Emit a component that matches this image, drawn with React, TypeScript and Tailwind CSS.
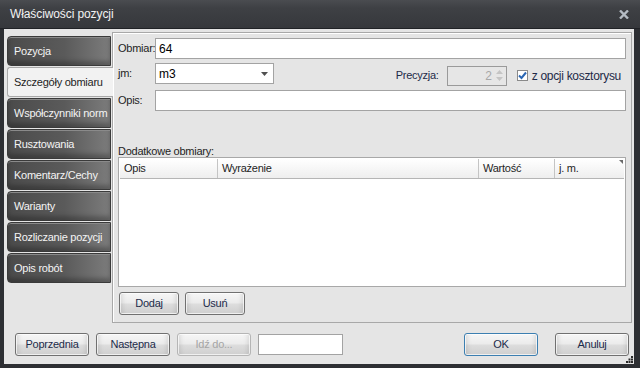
import React from "react";

const font = { fontFamily: '"Liberation Sans", Arial, sans-serif' };

const tabs = [
  "Pozycja",
  "Szczegóły obmiaru",
  "Współczynniki norm",
  "Rusztowania",
  "Komentarz/Cechy",
  "Warianty",
  "Rozliczanie pozycji",
  "Opis robót",
];

function Btn({
  label,
  w,
  disabled,
  primary,
}: {
  label: string;
  w: string;
  disabled?: boolean;
  primary?: boolean;
}) {
  return (
    <div
      className={`${w} h-[23px] flex items-center justify-center rounded-[3px] border text-[11px] ${
        primary ? "border-[#3c7fb1]" : disabled ? "border-[#b5b5b5]" : "border-[#707070]"
      } ${disabled ? "text-[#a5a5a5]" : "text-[#1c2b4a]"} bg-[linear-gradient(to_bottom,#f6f6f6_0%,#ececec_45%,#dcdcdc_55%,#cfcfcf_100%)] shadow-[inset_0_0_0_1px_rgba(255,255,255,0.7),inset_6px_0_5px_-4px_rgba(0,0,0,0.12),inset_-6px_0_5px_-4px_rgba(0,0,0,0.12)]`}
    >
      {label}
    </div>
  );
}

export default function App() {
  return (
    <div
      className="w-[640px] h-[368px] bg-[#2d2f33] flex flex-col overflow-hidden whitespace-nowrap"
      style={font}
    >
      {/* Title bar */}
      <div className="h-[29px] shrink-0 flex items-center justify-between pl-[10px] pr-[10px] bg-[linear-gradient(to_bottom,#4a4c50_0%,#3e4044_30%,#36383c_100%)] border-b border-[#202226]">
        <span className="text-[12px] text-[#f2f2f2] pb-[1px] tracking-[-0.1px]">Właściwości pozycji</span>
        <svg width="10" height="9" viewBox="0 0 10 9" className="mr-[1px]">
          <path d="M1 0.5 L9 8.5 M9 0.5 L1 8.5" stroke="#b5bcc4" strokeWidth="2.4" />
        </svg>
      </div>

      {/* Client area */}
      <div className="flex-1 ml-[4px] mr-[6px] mb-[4px] bg-[#e5e5e5] flex flex-col relative tracking-[-0.25px]">
        <div className="flex mt-[3px] mr-[2px]">
          {/* Tabs */}
          <div className="w-[108px] shrink-0 pl-[3px] pt-[4px] flex flex-col gap-[1px]">
            {tabs.map((t, i) =>
              i === 1 ? (
                <div
                  key={t}
                  className="relative z-10 h-[30px] -mr-[1px] flex items-center pl-[6px] text-[11px] text-[#1e1e1e] bg-[#f2f2f2] border border-r-0 border-[#a9a9a9] rounded-l-[3px]"
                >
                  {t}
                </div>
              ) : (
                <div
                  key={t}
                  className="h-[30px] mr-[1px] flex items-center pl-[6px] text-[11px] text-[#f4f4f4] rounded-l-[4px] border border-[#3a3a3a] overflow-hidden bg-[linear-gradient(to_right,#4b4b4b_0%,#5a5a5a_55%,#7c7c7c_100%)] shadow-[inset_0_1px_0_#8a8a8a,inset_0_-4px_4px_rgba(0,0,0,0.25)]"
                >
                  {t}
                </div>
              )
            )}
          </div>

          {/* Panel */}
          <div className="flex-1 h-[291px] border border-[#a8a8a8] shadow-[inset_1px_1px_0_#ffffff] bg-[#e5e5e5] px-[5px] pt-[5px] flex flex-col text-[11px] text-[#1e1e1e]">
            {/* Row 1 */}
            <div className="flex items-center h-[21px]">
              <span className="w-[37px]">Obmiar:</span>
              <div className="flex-1 h-[21px] bg-white border border-[#a3a3a3] flex items-center pl-[3px] text-[12px] text-black tracking-normal">
                64
              </div>
            </div>
            {/* Row 2 */}
            <div className="flex items-center h-[21px] mt-[4px]">
              <span className="w-[37px]">jm:</span>
              <div className="w-[119px] h-[21px] bg-white border border-[#a3a3a3] flex items-center justify-between pl-[3px] pr-[5px] text-[12px] text-black tracking-normal">
                <span>m3</span>
                <svg width="7" height="4" viewBox="0 0 7 4">
                  <path d="M0 0 H7 L3.5 4 Z" fill="#505050" />
                </svg>
              </div>
              <div className="flex-1" />
              <span className="mt-[4px] mr-[8px] text-[#1e2a48]">Precyzja:</span>
              <div className="mt-[4px] w-[60px] h-[20px] border border-[#9a9a9a] bg-[#e6e6e6] flex items-center justify-end pr-[2px]">
                <span className="text-[12px] text-[#a8a8a8] mr-[4px]">2</span>
                <div className="flex flex-col gap-[3px] mr-[1px]">
                  <svg width="7" height="4" viewBox="0 0 7 4">
                    <path d="M0 4 H7 L3.5 0 Z" fill="#c4c4c4" />
                  </svg>
                  <svg width="7" height="4" viewBox="0 0 7 4">
                    <path d="M0 0 H7 L3.5 4 Z" fill="#c4c4c4" />
                  </svg>
                </div>
              </div>
              <div className="mt-[4px] ml-[10px] w-[11px] h-[11px] border border-[#8a8a8a] bg-white flex items-center justify-center">
                <svg width="9" height="9" viewBox="0 0 9 9">
                  <path d="M1 4.5 L3.5 7 L8 1.5" stroke="#2a66b4" strokeWidth="2" fill="none" />
                </svg>
              </div>
              <span className="mt-[4px] ml-[4px] mr-[5px] text-[12px] text-[#1e2a48] tracking-[-0.3px]">z opcji kosztorysu</span>
            </div>
            {/* Row 3 */}
            <div className="flex items-center h-[21px] mt-[6px]">
              <span className="w-[37px]">Opis:</span>
              <div className="flex-1 h-[21px] bg-white border border-[#a3a3a3]" />
            </div>

            <div className="mt-[33px] h-[14px] leading-[14px]">Dodatkowe obmiary:</div>

            {/* Table */}
            <div className="mt-[-1px] h-[130px] border border-[#a8a8a8] bg-white flex flex-col p-[1px]">
              <div className="relative h-[20px] flex bg-[linear-gradient(to_bottom,#ffffff,#eeeeee)] border-b border-[#b5b5b5] text-[11px]">
                <div className="w-[98px] border-r border-[#c4c4c4] flex items-center pl-[4px]">Opis</div>
                <div className="w-[261px] border-r border-[#c4c4c4] flex items-center pl-[4px]">Wyrażenie</div>
                <div className="w-[76px] border-r border-[#c4c4c4] flex items-center pl-[4px]">Wartość</div>
                <div className="flex-1 flex items-center pl-[4px]">j. m.</div>
                <svg width="4" height="4" viewBox="0 0 4 4" className="absolute right-[1px] top-[1px]">
                  <path d="M0 0 H4 V4 Z" fill="#6a6a6a" />
                </svg>
              </div>
            </div>

            <div className="flex gap-[6px] mt-[5px] ml-[1px]">
              <Btn label="Dodaj" w="w-[60px]" />
              <Btn label="Usuń" w="w-[60px]" />
            </div>
          </div>
        </div>

        {/* Bottom bar */}
        <div className="flex items-center mt-[10px] pl-[11px]">
          <Btn label="Poprzednia" w="w-[74px]" />
          <div className="w-[7px]" />
          <Btn label="Następna" w="w-[74px]" />
          <div className="w-[7px]" />
          <Btn label="Idź do..." w="w-[74px]" disabled />
          <div className="w-[7px]" />
          <div className="w-[85px] h-[21px] bg-white border border-[#a3a3a3]" />
          <div className="flex-1" />
          <Btn label="OK" w="w-[74px]" primary />
          <div className="w-[17px]" />
          <Btn label="Anuluj" w="w-[74px]" />
          <div className="w-[5px]" />
        </div>

        {/* Resize grip */}
        <svg width="7" height="7" viewBox="0 0 7 7" className="absolute right-[1px] bottom-[1px]">
          <rect x="5" y="0" width="2" height="2" fill="#2a2a2a" />
          <rect x="2.5" y="2.5" width="2" height="2" fill="#2a2a2a" />
          <rect x="5" y="2.5" width="2" height="2" fill="#2a2a2a" />
          <rect x="0" y="5" width="2" height="2" fill="#2a2a2a" />
          <rect x="2.5" y="5" width="2" height="2" fill="#2a2a2a" />
          <rect x="5" y="5" width="2" height="2" fill="#2a2a2a" />
        </svg>
      </div>
    </div>
  );
}
